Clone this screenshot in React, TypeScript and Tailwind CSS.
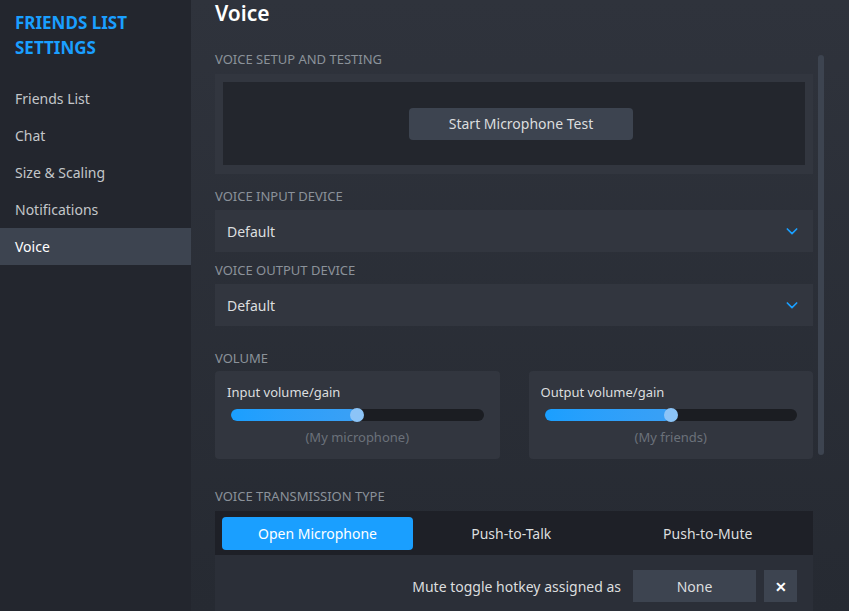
import React from "react";

const NAV = ["Friends List", "Chat", "Size & Scaling", "Notifications", "Voice"];

function Label({ children }: { children: React.ReactNode }) {
  return <div className="text-[13px] uppercase text-[#8b929a] leading-4">{children}</div>;
}

function Chevron() {
  return (
    <svg width="16" height="16" viewBox="0 0 24 24" fill="none" stroke="#1a9fff" strokeWidth="2.5" strokeLinecap="round" strokeLinejoin="round">
      <path d="M5 9l7 7 7-7" />
    </svg>
  );
}

function Dropdown() {
  return (
    <div className="h-[42px] bg-[#32363f] flex items-center justify-between px-3 pr-[13px] text-[14px] text-[#dcdedf]">
      <span>Default</span>
      <Chevron />
    </div>
  );
}

function Slider({ title, sub }: { title: string; sub: string }) {
  return (
    <div className="flex-1 bg-[#32363f] rounded-sm h-[88px] px-3 pt-[13px]">
      <div className="text-[13px] text-[#dcdedf] leading-4">{title}</div>
      <div className="mt-[9px] mx-1 h-[12px] rounded-full bg-[#1b1d22] relative">
        <div className="h-full w-1/2 rounded-full bg-gradient-to-r from-[#1a9fff] to-[#3aa0f5]" />
        <div className="absolute top-[-1px] left-[calc(50%-7px)] w-[14px] h-[14px] rounded-full bg-[#8cc4f7]" />
      </div>
      <div className="text-center text-[13px] text-[#6b717a] mt-[7px]">{sub}</div>
    </div>
  );
}

export default function App() {
  return (
    <div className="w-[849px] h-[611px] overflow-hidden flex bg-[#2b2f38] text-white" style={{ fontFamily: "'Noto Sans', Lato, sans-serif" }}>
      <div className="w-[191px] shrink-0 bg-[#23262e] pt-[10px]">
        <div className="px-[15px] text-[17px] font-bold text-[#1a9fff] leading-[25px]">FRIENDS LIST<br />SETTINGS</div>
        <div className="mt-[20px]">
          {NAV.map((n) => (
            <div key={n} className={`h-[37px] flex items-center px-[15px] text-[14px] ${n === "Voice" ? "bg-[#3d4450] text-white" : "text-[#c3c6ca]"}`}>
              {n}
            </div>
          ))}
        </div>
      </div>
      <div className="flex-1 flex bg-gradient-to-b from-[#2f333c] to-[#262a32]">
        <div className="w-[598px] ml-[24px] pt-[1px]">
          <div className="text-[21px] font-semibold leading-[24px] h-[50px]">Voice</div>
          <Label>VOICE SETUP AND TESTING</Label>
          <div className="mt-[7px] bg-[#32363f] p-2 h-[100px]">
            <div className="bg-[#23262d] h-[83px] flex items-center justify-center">
              <div className="ml-[14px] w-[224px] h-[32px] bg-[#3d4450] rounded-sm flex items-center justify-center text-[14px] text-[#dcdedf]">
                Start Microphone Test
              </div>
            </div>
          </div>
          <div className="mt-[14px]"><Label>VOICE INPUT DEVICE</Label></div>
          <div className="mt-[6px]"><Dropdown /></div>
          <div className="mt-[10px]"><Label>VOICE OUTPUT DEVICE</Label></div>
          <div className="mt-[6px]"><Dropdown /></div>
          <div className="mt-[24px]"><Label>VOLUME</Label></div>
          <div className="mt-[5px] flex gap-[29px]">
            <Slider title="Input volume/gain" sub="(My microphone)" />
            <Slider title="Output volume/gain" sub="(My friends)" />
          </div>
          <div className="mt-[29px]"><Label>VOICE TRANSMISSION TYPE</Label></div>
          <div className="mt-[7px]">
            <div className="bg-[#1e2027] h-[44px] flex items-center px-[7px] text-[14px] text-[#dcdedf]">
              <div className="w-[191px] h-[33px] bg-[#1a9fff] rounded-sm flex items-center justify-center text-white">Open Microphone</div>
              <div className="flex-1 text-center">Push-to-Talk</div>
              <div className="flex-1 text-center">Push-to-Mute</div>
            </div>
            <div className="bg-[#2b2f38] h-[60px] flex items-start justify-end pt-[15px] pr-[16px] gap-2 text-[14px] text-[#dcdedf]">
              <span className="mt-[6px] mr-[4px]">Mute toggle hotkey assigned as</span>
              <div className="w-[123px] h-[32px] bg-[#3d4450] flex items-center justify-center">None</div>
              <div className="w-[33px] h-[32px] bg-[#3d4450] flex items-center justify-center font-bold text-white">✕</div>
            </div>
          </div>
        </div>
        <div className="ml-[5px] mt-[55px] w-[6px] h-[400px] rounded-full bg-[#3d4450]" />
      </div>
    </div>
  );
}
